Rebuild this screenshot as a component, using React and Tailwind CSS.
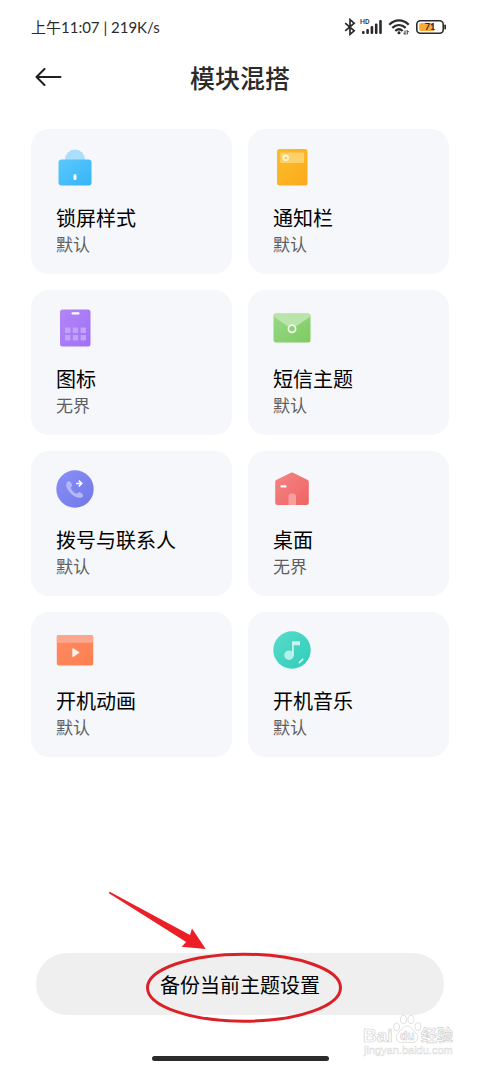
import React from 'react';

function LockIcon() {
  return (
    <svg viewBox="0 0 38 38" className="size-[38px]" aria-hidden="true">
      <defs>
        <linearGradient id="lock" x1="0" y1="0" x2="1" y2="1">
          <stop offset="0" stopColor="#5cc8fc" />
          <stop offset="1" stopColor="#35b4f8" />
        </linearGradient>
      </defs>
      <circle cx="19" cy="11.500" r="10" fill="#a9dffb" />
      <rect x="2.500" y="11.500" width="33" height="26" rx="3" fill="url(#lock)" />
      <rect x="17.500" y="26" width="3" height="6" rx="1.500" fill="#fff" />
    </svg>
  );
}

function PanelIcon() {
  return (
    <svg viewBox="0 0 38 38" className="size-[38px]" aria-hidden="true">
      <defs>
        <linearGradient id="panel" x1="0" y1="0" x2="1" y2="1">
          <stop offset="0" stopColor="#f9bd2b" />
          <stop offset="1" stopColor="#fdaa1b" />
        </linearGradient>
      </defs>
      <rect x="4" y="1" width="30.500" height="36.500" rx="2.500" fill="url(#panel)" />
      <rect x="7.200" y="4.500" width="24" height="10.500" rx="1" fill="#fdd06a" />
      <circle cx="12.700" cy="9.700" r="2.400" fill="none" stroke="#fff6dc" strokeWidth="1.700" />
    </svg>
  );
}

function AppsIcon() {
  return (
    <svg viewBox="0 0 38 38" className="size-[38px]" aria-hidden="true">
      <defs>
        <linearGradient id="apps" x1="0" y1="0" x2="1" y2="1">
          <stop offset="0" stopColor="#b287f6" />
          <stop offset="1" stopColor="#a070f6" />
        </linearGradient>
      </defs>
      <rect x="4" y="0.500" width="30.500" height="37" rx="2.500" fill="url(#apps)" />
      <rect x="15.500" y="3.300" width="8" height="2.200" rx="1" fill="#fff" />
      <g fill="#c3a3fa">
        <rect x="9" y="18.500" width="5.400" height="5.400" rx="0.600" />
        <rect x="16.800" y="18.500" width="5.400" height="5.400" rx="0.600" />
        <rect x="24.600" y="18.500" width="5.400" height="5.400" rx="0.600" />
        <rect x="9" y="26" width="5.400" height="5.400" rx="0.600" />
        <rect x="16.800" y="26" width="5.400" height="5.400" rx="0.600" />
        <rect x="24.600" y="26" width="5.400" height="5.400" rx="0.600" />
      </g>
    </svg>
  );
}

function MessageIcon() {
  return (
    <svg viewBox="0 0 38 38" className="size-[38px]" aria-hidden="true">
      <defs>
        <linearGradient id="mail" x1="0" y1="0" x2="1" y2="1">
          <stop offset="0" stopColor="#98d889" />
          <stop offset="1" stopColor="#7fcb60" />
        </linearGradient>
      </defs>
      <rect x="0.500" y="4.500" width="37" height="29" rx="2.500" fill="url(#mail)" />
      <path d="M.5 7.500V7A2.500 2.500 0 0 1 3 4.500h32A2.500 2.500 0 0 1 37.500 7v.5L20.200 19.200a2.500 2.500 0 0 1-2.600 0Z" fill="#b9e5ab" />
      <circle cx="19" cy="19.800" r="3.600" fill="#8fcf78" stroke="#f1faee" strokeWidth="1.700" />
    </svg>
  );
}

function PhoneIcon() {
  return (
    <svg viewBox="0 0 38 38" className="size-[38px]" aria-hidden="true">
      <defs>
        <linearGradient id="phone" x1="0" y1="0" x2="1" y2="1">
          <stop offset="0" stopColor="#8a8ff8" />
          <stop offset="1" stopColor="#7178e6" />
        </linearGradient>
      </defs>
      <circle cx="19" cy="19" r="18.700" fill="url(#phone)" />
      <path
        d="M10.800 12.600c.9-1.500 2.700-1.900 3.700-.7l1.300 2.200c.6 1.100.3 2.200-.6 3-.6.600-.4 1.300.2 2.200 1 1.700 2.300 3 4 4 .9.500 1.500.5 2-.1.800-1 2-1.200 3-.6l2 1.300c1.200 1 .8 2.600-.4 3.300-2.800 1.500-7 .3-10.800-3.400-4.300-4.200-5.900-8.400-4.400-11.200Z"
        fill="#b4b8fa"
      />
      <path d="M20 13.500h5.500M22.800 10.600l3 2.900-3 2.900" fill="none" stroke="#fff" strokeWidth="1.500" />
    </svg>
  );
}

function HomeIcon() {
  return (
    <svg viewBox="0 0 38 38" className="size-[38px]" aria-hidden="true">
      <defs>
        <linearGradient id="home" x1="0" y1="0" x2="1" y2="1">
          <stop offset="0" stopColor="#f58585" />
          <stop offset="1" stopColor="#ef6464" />
        </linearGradient>
      </defs>
      <path
        d="M17.900 2.800a2.500 2.500 0 0 1 2.200 0l14.200 7a2.500 2.500 0 0 1 1.500 2.200v20.500a2.500 2.500 0 0 1-2.500 2.500H4.700a2.500 2.500 0 0 1-2.500-2.500V12a2.500 2.500 0 0 1 1.500-2.200Z"
        fill="url(#home)"
      />
      <rect x="7.500" y="15.200" width="6" height="2.300" rx="0.800" fill="#fff" />
      <path d="M15.500 35V26.500a3 3 0 0 1 3-3h1.500a3 3 0 0 1 3 3V35Z" fill="#f79f9f" />
    </svg>
  );
}

function VideoIcon() {
  return (
    <svg viewBox="0 0 38 38" className="size-[38px]" aria-hidden="true">
      <defs>
        <linearGradient id="video" x1="0" y1="0" x2="1" y2="1">
          <stop offset="0" stopColor="#ff8a65" />
          <stop offset="1" stopColor="#fd7f4e" />
        </linearGradient>
      </defs>
      <rect x="0.800" y="4" width="36.400" height="30.500" rx="2" fill="url(#video)" />
      <path d="M.8 11.800V6a2 2 0 0 1 2-2h32.400a2 2 0 0 1 2 2v5.800Z" fill="#fba78d" />
      <path d="M16.300 17.800v7.600a.6.6 0 0 0 1 .5l5.700-3.800a.6.6 0 0 0 0-1l-5.700-3.800a.6.6 0 0 0-1 .5Z" fill="#fff1eb" />
    </svg>
  );
}

function MusicIcon() {
  return (
    <svg viewBox="0 0 38 38" className="size-[38px]" aria-hidden="true">
      <defs>
        <linearGradient id="music" x1="0" y1="0" x2="1" y2="1">
          <stop offset="0" stopColor="#5bdccb" />
          <stop offset="1" stopColor="#2dcdb9" />
        </linearGradient>
      </defs>
      <circle cx="19" cy="19" r="18.700" fill="url(#music)" />
      <circle cx="16" cy="24.200" r="4.800" fill="#b3f0e7" />
      <path d="M19 10.200h8v4h-6.200v10H19Z" fill="#c9f5ef" />
      <path d="M26.300 31.600l3.500-3.400" stroke="#e9fffb" strokeWidth="1.500" strokeLinecap="round" />
    </svg>
  );
}

const modules = [
  { title: '锁屏样式', value: '默认', Icon: LockIcon },
  { title: '通知栏', value: '默认', Icon: PanelIcon },
  { title: '图标', value: '无界', Icon: AppsIcon },
  { title: '短信主题', value: '默认', Icon: MessageIcon },
  { title: '拨号与联系人', value: '默认', Icon: PhoneIcon },
  { title: '桌面', value: '无界', Icon: HomeIcon },
  { title: '开机动画', value: '默认', Icon: VideoIcon },
  { title: '开机音乐', value: '默认', Icon: MusicIcon },
];

function StatusBar() {
  return (
    <div className="flex h-[54px] items-center justify-between pr-[34px] pl-[31px] text-[#2b2b2b]">
      <span className="font-['Lato','Noto_Sans_CJK_SC',sans-serif] text-[15px] leading-5">上午11:07 | 219K/s</span>
      <div className="flex items-center gap-1">
        <svg viewBox="0 0 12 18" className="h-[18px] w-3" fill="none" stroke="currentColor" strokeWidth="1.700" aria-hidden="true">
          <path d="M1.200 5.200l9 7.600L6 16.400V1.600l4.200 3.600L1.200 12.800" />
        </svg>
        <div className="relative h-[18px] w-6">
          <span className="absolute top-0 left-0 font-['Roboto',sans-serif] text-[7px] leading-[8px] font-medium">HD</span>
          <svg viewBox="0 0 24 18" className="h-[18px] w-6" fill="currentColor" aria-hidden="true">
            <rect x="2" y="13" width="2.600" height="3" rx="1" />
            <rect x="6.300" y="11" width="2.600" height="5" rx="1" />
            <rect x="10.600" y="8" width="2.600" height="8" rx="1" />
            <rect x="14.900" y="5.500" width="2.600" height="10.500" rx="1" />
            <rect x="19.200" y="2" width="2.600" height="14" rx="1" />
          </svg>
        </div>
        <svg viewBox="0 0 22 18" className="h-[18px] w-[22px]" fill="none" stroke="currentColor" strokeWidth="2.200" aria-hidden="true">
          <path d="M1.300 6.700C7 1 15 1 20.700 6.700M4.300 9.900c4-3.900 9.400-3.900 13.400 0M7.300 13c2.300-2.200 5-2.200 7.300 0" />
          <circle cx="11" cy="14.800" r="1.500" fill="currentColor" stroke="none" />
          <path d="M17 12.500v4M15.400 14.800l1.600 1.700M19.200 16.500v-4M20.800 14.200l-1.600-1.700" strokeWidth="1" />
        </svg>
        <div className="relative ml-0.5 h-[14px] w-[30px]">
          <svg viewBox="0 0 30 14" className="h-[14px] w-[30px]" aria-hidden="true">
            <rect x="0.800" y="0.800" width="26.400" height="12.400" rx="3.500" fill="#fff" stroke="#2b2b2b" strokeWidth="1.600" />
            <path d="M5 3h13v8H5a1.800 1.800 0 0 1-1.800-1.800V4.800A1.800 1.800 0 0 1 5 3Z" fill="#fbaa35" />
            <rect x="28.300" y="4.500" width="1.700" height="5" rx="0.800" fill="#2b2b2b" />
          </svg>
          <span className="absolute inset-y-0 left-0 w-7 text-center font-['Lato',sans-serif] text-[9px] leading-[14px] font-bold">71</span>
        </div>
      </div>
    </div>
  );
}

function Watermark() {
  return (
    <div className="pointer-events-none absolute right-[27px] bottom-2 w-[90px]" aria-hidden="true">
      <svg viewBox="0 0 90 46" className="w-full" fontFamily="'Liberation Sans','Noto Sans CJK SC',sans-serif">
        <g fill="#fff" fillOpacity="0.700" stroke="#d2d2d2" strokeWidth="0.700">
          <text x="0" y="28" fontSize="19" fontWeight="700">Bai</text>
          <ellipse cx="33.500" cy="13" rx="3" ry="4" />
          <ellipse cx="40.500" cy="5.500" rx="3" ry="4.200" />
          <ellipse cx="48" cy="5.500" rx="3" ry="4.200" />
          <ellipse cx="55" cy="12.500" rx="3" ry="4" />
          <path d="M44 12c4 0 5 3.500 8 6 4.500 3.800 3.500 10.500-2.500 10.500-4-.4-7-.4-11 0-6 0-7-6.700-2.500-10.500 3-2.500 4-6 8-6Z" />
          <text x="37" y="26" fontSize="12" fontWeight="700">du</text>
          <text x="58" y="27" fontSize="16" fontWeight="700">经验</text>
        </g>
        <text x="1" y="40" fontSize="11" fill="#fff" stroke="#dadada" strokeWidth="0.500">jingyan.baidu.com</text>
      </svg>
    </div>
  );
}

export default function App() {
  return (
    <div className="relative flex min-h-screen flex-col bg-white font-['Noto_Sans_CJK_SC',sans-serif] text-black">
      <StatusBar />
      <header className="grid h-[45px] grid-cols-[1fr_auto_1fr] items-center px-[35px]">
        <button type="button" aria-label="返回" className="w-[27px]">
          <svg viewBox="0 0 27 18" className="h-[18px] w-[27px]" fill="none" stroke="#1f1f1f" strokeWidth="2" strokeLinecap="round" strokeLinejoin="round" aria-hidden="true">
            <path d="M25.500 9H1.500M9.500 1L1.500 9l8 8" />
          </svg>
        </button>
        <h1 className="text-[25px] leading-8 font-medium text-[#2b2b2b]">模块混搭</h1>
      </header>

      <main className="mt-[30px] grid grid-cols-2 gap-4 px-[31px]">
        {modules.map(({ title, value, Icon }) => (
          <button key={title} type="button" className="flex flex-col items-start rounded-[18px] bg-[#f5f7fb] px-[25px] pt-[19px] pb-[18px] text-left">
            <Icon />
            <span className="mt-[18px] text-[20px] leading-7">{title}</span>
            <span className="text-[17px] leading-6 text-[#5d5f63]">{value}</span>
          </button>
        ))}
      </main>

      <footer className="mt-auto flex flex-col items-center px-9 pt-10 pb-[7px]">
        <div className="relative w-full">
          <button type="button" className="h-[62px] w-full rounded-full bg-[#efefef] pt-0.5 text-[20px] leading-7">
            备份当前主题设置
          </button>
          <svg viewBox="0 0 240 134" className="pointer-events-none absolute bottom-[-9px] left-1/2 h-[134px] w-[240px] -translate-x-[133px]" aria-hidden="true">
            <path d="M2.300 3.500c-.9-.7-.3-2 .9-1.500L83 45l2-6.500 13.700 20.500-24-2.300 4.500-4.700Z" fill="#ec1f27" />
            <ellipse cx="137" cy="97.700" rx="96.500" ry="33.500" fill="none" stroke="#da2128" strokeWidth="3" />
          </svg>
        </div>
        <div className="mt-[41px] h-[5px] w-[177px] rounded-full bg-[#2b2b2b]" />
      </footer>
      <Watermark />
    </div>
  );
}
